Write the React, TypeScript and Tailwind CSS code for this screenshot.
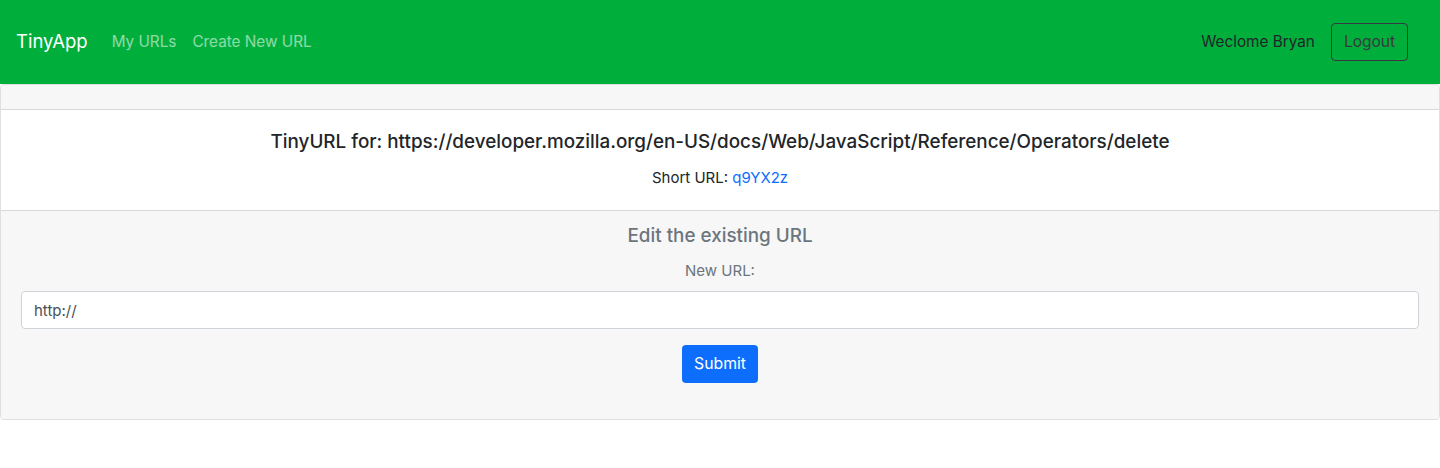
import React from "react";

const App = () => {
  return (
    <div
      className="min-h-screen bg-white text-[#212529]"
      style={{ fontFamily: "Inter, 'Liberation Sans', sans-serif" }}
    >
      <nav className="h-[84px] bg-[#00ae3c] flex items-center justify-between pl-4 pr-8">
        <div className="flex items-center">
          <span className="text-[18.5px] text-white mr-6">TinyApp</span>
          <a className="text-[15.3px] text-white/55 mr-4">My URLs</a>
          <a className="text-[15.3px] text-white/55">Create New URL</a>
        </div>
        <div className="flex items-center">
          <span className="text-[15.3px] text-[#212529] mr-4">Weclome Bryan</span>
          <button className="h-[38px] px-3 text-[15.5px] text-[#343a40] border border-[#343a40] rounded-[4px]">
            Logout
          </button>
        </div>
      </nav>

      <div className="border border-black/[0.125] rounded-[4px] overflow-hidden">
        <div className="h-[25px] bg-[#f7f7f7] border-b border-black/[0.125]"></div>
        <div className="bg-white flex flex-col items-center pt-[21px] pb-[21px]">
          <h5 className="text-[18.85px] font-medium leading-[1.2]">
            TinyURL for: https://developer.mozilla.org/en-US/docs/Web/JavaScript/Reference/Operators/delete
          </h5>
          <p className="text-[15px] mt-[13px]">
            Short URL: <a className="text-[#0d6efd]">q9YX2z</a>
          </p>
        </div>
        <div className="bg-[#f7f7f7] border-t border-black/[0.125] flex flex-col items-center px-5 pt-[14px] pb-[36px]">
          <h5 className="text-[18.85px] font-medium leading-[1.2] text-[#6c757d]">
            Edit the existing URL
          </h5>
          <label className="text-[15px] text-[#6c757d] mt-[12px]">New URL:</label>
          <input
            className="mt-[9px] w-full h-[38px] bg-white border border-[#ced4da] rounded-[4px] px-3 text-[15px] text-[#495057] outline-none"
            defaultValue="http://"
          />
          <button className="mt-[16px] h-[38px] px-3 bg-[#0d6efd] text-white text-[15.8px] rounded-[4px]">
            Submit
          </button>
        </div>
      </div>
    </div>
  );
};

export default App;
